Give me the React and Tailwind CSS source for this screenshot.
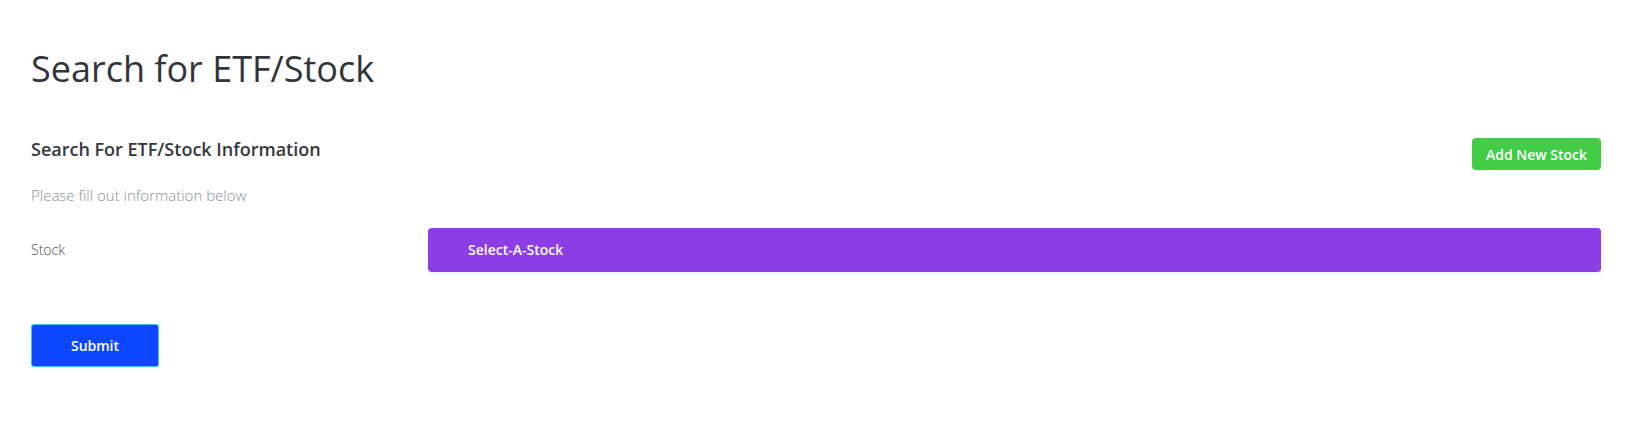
export default function App() {
  return (
    <div
      className="min-h-[433px] bg-white px-[31px] pt-[47px] pr-[30px]"
      style={{ fontFamily: '"Open Sans", "Noto Sans", sans-serif' }}
    >
      <h1 className="text-[36px] leading-[43px] font-normal text-[#30353b]">
        Search for ETF/Stock
      </h1>
      <div className="mt-[47px] flex items-start justify-between">
        <h2 className="text-[18px] leading-[24px] font-semibold text-[#33383e]">
          Search For ETF/Stock Information
        </h2>
        <button className="mt-px h-[32px] w-[129px] rounded-[4px] bg-[#43cc48] text-[14px] font-semibold text-white">
          Add New Stock
        </button>
      </div>
      <p className="mt-[15px] text-[15px] leading-[20px] font-light text-[#868f9e]">
        Please fill out information below
      </p>
      <div className="mt-[23px] flex items-center">
        <div className="w-[397px] shrink-0 text-[14px] leading-[20px] font-light text-[#4a4f55]">
          Stock
        </div>
        <div className="flex h-[44px] flex-1 items-center rounded-[4px] bg-[#8d3de5] pl-[40px] text-[14px] leading-[20px] font-semibold text-white shadow-[0_2px_4px_rgba(140,80,230,0.12)]">
          Select-A-Stock
        </div>
      </div>
      <button className="mt-[52px] h-[43px] w-[128px] rounded-[3px] border border-[#39c9e0] bg-[#0e47ff] text-[14px] font-semibold text-white">
        Submit
      </button>
    </div>
  );
}
